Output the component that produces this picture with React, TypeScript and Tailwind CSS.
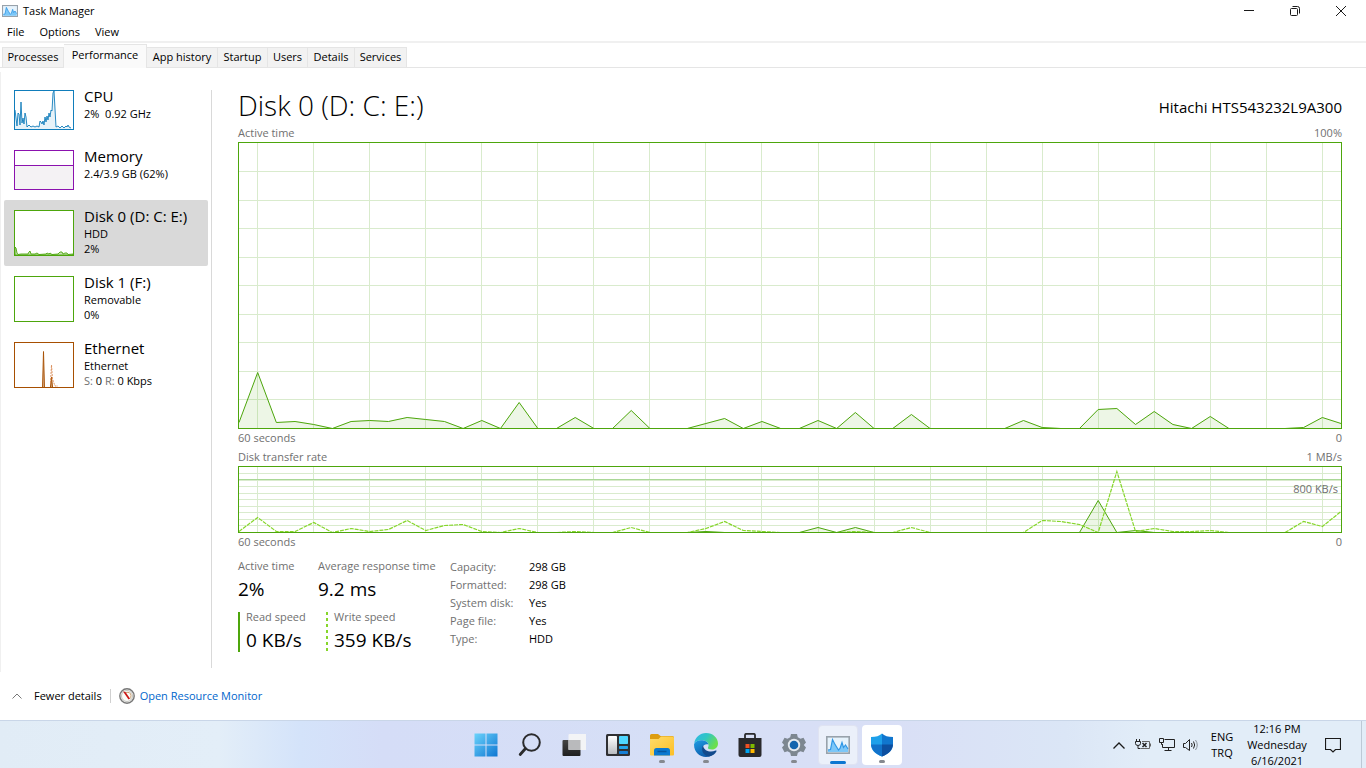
import React, { useState } from 'react';

interface Resource {
  id: string;
  name: string;
  lines: React.ReactNode[];
  graph: React.ReactNode;
}

const TABS = [
  { label: 'Processes', width: 'w-[62px]' },
  { label: 'Performance', width: 'w-[83px]' },
  { label: 'App history', width: 'w-[71px]' },
  { label: 'Startup', width: 'w-[50px]' },
  { label: 'Users', width: 'w-[40px]' },
  { label: 'Details', width: 'w-[47px]' },
  { label: 'Services', width: 'w-[52px]' },
];

// One sample per second, 60 samples. Values are in chart units from the bottom.
const ACTIVE_TIME = [
  6, 56, 6, 7, 4, 0, 7, 8, 7, 11, 9, 7, 0, 8, 0, 26, 0, 0, 11, 0,
  0, 18, 0, 0, 0, 5, 10, 0, 7, 0, 0, 8, 0, 16, 0, 0, 14, 0, 0, 0,
  0, 0, 8, 1, 0, 0, 19, 20, 4, 17, 4, 0, 12, 0, 0, 0, 0, 1, 11, 5,
];
const WRITE_SPEED = [
  1, 15, 1, 1, 10, 0, 4, 1, 3, 12, 2, 7, 8, 1, 0, 4, 0, 0, 1, 0,
  0, 5, 0, 0, 0, 4, 11, 2, 1, 0, 0, 0, 0, 1, 0, 0, 5, 0, 0, 0,
  0, 0, 0, 12, 11, 8, 0, 61, 1, 4, 1, 1, 2, 0, 0, 0, 0, 11, 6, 21,
];
const READ_SPEED = [
  0, 0, 0, 0, 0, 0, 0, 0, 0, 0, 0, 0, 0, 0, 0, 0, 0, 0, 0, 0,
  0, 0, 0, 0, 0, 1, 0, 0, 0, 0, 0, 5, 0, 5, 0, 0, 0, 0, 0, 0,
  0, 0, 0, 0, 0, 0, 32, 0, 2, 0, 0, 0, 0, 0, 0, 0, 0, 0, 0, 0,
];

const toPoints = (values: number[], height: number) =>
  values.map((v, i) => `${i * 10},${height - v}`).join(' ');

const Grid: React.FC<{ height: number; rows: number }> = ({ height, rows }) => (
  <g stroke="#d9ebcd" shapeRendering="crispEdges">
    {Array.from({ length: 20 }, (_, i) => (
      <line key={`v${i}`} x1={10 + i * 30} x2={10 + i * 30} y1={0} y2={height} vectorEffect="non-scaling-stroke" />
    ))}
    {Array.from({ length: rows - 1 }, (_, i) => (
      <line key={`h${i}`} x1={0} x2={590} y1={((i + 1) * height) / rows} y2={((i + 1) * height) / rows} vectorEffect="non-scaling-stroke" />
    ))}
  </g>
);

const ActiveTimeChart = () => (
  <svg viewBox="0 0 590 285" preserveAspectRatio="none" className="block min-h-60 w-full grow basis-0 border border-[#4da60c]">
    <Grid height={285} rows={10} />
    <polygon points={`0,285 ${toPoints(ACTIVE_TIME, 285)} 590,285`} fill="#4da60c" fillOpacity="0.1" />
    <polyline points={toPoints(ACTIVE_TIME, 285.5)} fill="none" stroke="#4da60c" vectorEffect="non-scaling-stroke" />
  </svg>
);

const TransferChart = () => (
  <div className="relative">
    <svg viewBox="0 0 590 65" preserveAspectRatio="none" className="block h-[67px] w-full border border-[#4da60c]">
      <Grid height={65} rows={10} />
      <line x1="0" x2="590" y1="12.5" y2="12.5" stroke="#a9d796" vectorEffect="non-scaling-stroke" />
      <polygon points={`0,65 ${toPoints(READ_SPEED, 65)} 590,65`} fill="#4da60c" fillOpacity="0.1" />
      <polyline points={toPoints(READ_SPEED, 65.5)} fill="none" stroke="#4da60c" vectorEffect="non-scaling-stroke" />
      <polyline points={toPoints(WRITE_SPEED, 65.5)} fill="none" stroke="#86d62b" strokeWidth="1.2" strokeDasharray="4 1" vectorEffect="non-scaling-stroke" />
    </svg>
    <span className="absolute top-[15px] right-1 leading-4 text-[#707070]">800 KB/s</span>
  </div>
);

const RESOURCES: Resource[] = [
  {
    id: 'cpu',
    name: 'CPU',
    lines: ['2%  0.92 GHz'],
    graph: (
      <svg viewBox="0 0 58 38" className="block h-10 w-[60px] border border-[#117dbb] bg-white">
        <path
          d="M0 19L1 27L2 35L3 22L4 23L5 34L6 11L7 32L8 27L9 33L10 22L11 26L12 36L14 34L16 36L18 35L20 36L22 35L24 36L25 30L26 31L27 33L28 30L29 34L30 26L31 31L32 25L33 29L34 22L35 26L36 19L37 20L38 2L39 0L40 18L41 36L43 35L45 37L47 35L49 37L51 35L52 36L53 34L54 36L56 37V38H0Z"
          fill="#117dbb"
          fillOpacity="0.1"
        />
        <path
          d="M0 19L1 27L2 35L3 22L4 23L5 34L6 11L7 32L8 27L9 33L10 22L11 26L12 36L14 34L16 36L18 35L20 36L22 35L24 36L25 30L26 31L27 33L28 30L29 34L30 26L31 31L32 25L33 29L34 22L35 26L36 19L37 20L38 2L39 0L40 18L41 36L43 35L45 37L47 35L49 37L51 35L52 36L53 34L54 36L56 37"
          fill="none"
          stroke="#117dbb"
          strokeWidth="0.9"
        />
      </svg>
    ),
  },
  {
    id: 'memory',
    name: 'Memory',
    lines: ['2.4/3.9 GB (62%)'],
    graph: (
      <svg viewBox="0 0 58 38" className="block h-10 w-[60px] border border-[#8b12ae] bg-white">
        <rect y="14" width="58" height="24" fill="#f4f2f4" />
        <path d="M0 14.5H58" stroke="#8b12ae" />
      </svg>
    ),
  },
  {
    id: 'disk0',
    name: 'Disk 0 (D: C: E:)',
    lines: ['HDD', '2%'],
    graph: (
      <svg viewBox="0 0 58 44" className="block h-[46px] w-[60px] border border-[#4da60c] bg-white">
        <path
          d="M0 36L1 37L2 42L3 43.5L6 43L13 43L14 41L15 40L16 43L20 43L22 42L24 43.5L31 43L32 42L34 43L35 42L37 43.5L43 43L45 41L47 41L48 43L50 42L52 42L53 43.5L58 43V44H0Z"
          fill="#4da60c"
          fillOpacity="0.3"
          stroke="#4da60c"
          strokeWidth="0.9"
        />
      </svg>
    ),
  },
  {
    id: 'disk1',
    name: 'Disk 1 (F:)',
    lines: ['Removable', '0%'],
    graph: <svg viewBox="0 0 58 44" className="block h-[46px] w-[60px] border border-[#4da60c] bg-white" />,
  },
  {
    id: 'ethernet',
    name: 'Ethernet',
    lines: [
      'Ethernet',
      <>
        <span className="text-[#707070]">S:</span> 0 <span className="text-[#707070]">R:</span> 0 Kbps
      </>,
    ],
    graph: (
      <svg viewBox="0 0 58 44" className="block h-[46px] w-[60px] border border-[#a74f01] bg-white">
        <path d="M27.5 44L28.5 8.5L29.5 44" fill="#a74f01" fillOpacity="0.5" stroke="#a74f01" strokeWidth="0.9" />
        <path d="M35.5 44L36.5 34L37.5 44" fill="#a74f01" fillOpacity="0.5" stroke="#a74f01" />
        <path d="M35.5 40L36.5 22L37.5 36L40 43H43" fill="none" stroke="#d98a55" strokeWidth="0.9" strokeDasharray="2 1" />
      </svg>
    ),
  },
];

const MonitorIcon: React.FC<{ className?: string }> = ({ className }) => (
  <svg viewBox="0 0 24 18" preserveAspectRatio="none" className={className}>
    <rect x="0.8" y="0.8" width="22.4" height="16.4" fill="#e6f3fc" stroke="#98a2ab" strokeWidth="1.6" />
    <path d="M2 14L4.5 13.5L6.500 3.500L8.500 7.500L10 10L12.500 14L14 12.500L16 6.500L17.500 11.500L19.500 9L22 13V16H2Z" fill="#7cc7f8" />
    <path d="M2 14L4.5 13.5L6.500 3.500L8.500 7.500L10 10L12.500 14L14 12.500L16 6.500L17.500 11.500L19.500 9L22 13" fill="none" stroke="#2f97e6" strokeWidth="1.2" />
  </svg>
);

const StartIcon = () => (
  <svg width="24" height="24" viewBox="0 0 24 24">
    <defs>
      <linearGradient id="start" x1="0" y1="0" x2="1" y2="1">
        <stop offset="0" stopColor="#6bd3fb" />
        <stop offset="1" stopColor="#0e76d2" />
      </linearGradient>
    </defs>
    <path d="M0.500 0.500H11.500V11.500H0.500ZM12.500 0.500H23.500V11.500H12.500ZM0.500 12.500H11.500V23.500H0.500ZM12.500 12.500H23.500V23.500H12.500Z" fill="url(#start)" />
  </svg>
);

const SearchIcon = () => (
  <svg width="24" height="24" viewBox="0 0 24 24" fill="none" stroke="#2b2b2d">
    <circle cx="13.500" cy="9.500" r="8.300" strokeWidth="2" />
    <path d="M7.500 15.500L2.200 21.500" strokeWidth="2.800" strokeLinecap="round" />
  </svg>
);

const TaskViewIcon = () => (
  <svg width="24" height="24" viewBox="0 0 24 24">
    <defs>
      <linearGradient id="tvDark" x1="0" y1="0" x2="0" y2="1">
        <stop offset="0" stopColor="#444" />
        <stop offset="1" stopColor="#1f1f1f" />
      </linearGradient>
    </defs>
    <rect x="0.500" y="7" width="18" height="16" rx="1" fill="url(#tvDark)" />
    <rect x="6.500" y="1" width="18" height="16" rx="1" fill="#f3f4f6" />
    <path d="M6.500 7H18.500V17H6.500Z" fill="#b9babc" />
  </svg>
);

const WidgetsIcon = () => (
  <svg width="24" height="24" viewBox="0 0 24 24">
    <defs>
      <linearGradient id="wdLight" x1="0" y1="0" x2="0" y2="1">
        <stop offset="0" stopColor="#fff" />
        <stop offset="1" stopColor="#b9bcc0" />
      </linearGradient>
    </defs>
    <rect y="1" width="24" height="22" rx="1.500" fill="#2f3033" />
    <rect x="2" y="3" width="9" height="18" rx="0.800" fill="url(#wdLight)" />
    <rect x="13" y="3" width="9" height="8" rx="0.800" fill="#4fd6ff" />
    <rect x="13" y="13" width="9" height="3" rx="0.800" fill="#23a5ec" />
    <rect x="13" y="18" width="9" height="3" rx="0.800" fill="#167fd4" />
  </svg>
);

const FolderIcon = () => (
  <svg width="24" height="24" viewBox="0 0 24 24">
    <defs>
      <linearGradient id="folder" x1="0" y1="0" x2="1" y2="1">
        <stop offset="0" stopColor="#ffdc6b" />
        <stop offset="1" stopColor="#fcbf26" />
      </linearGradient>
    </defs>
    <path d="M0 2.500Q0 1 1.500 1H8L10.500 3H22.500Q24 3 24 4.500V10H0Z" fill="#dd9d10" />
    <path d="M0 6H8.500L11 3.500H22.500Q24 3.500 24 5V21.500Q24 22.500 23 22.500H1Q0 22.500 0 21.500Z" fill="url(#folder)" />
    <path d="M4 22.500V17.500Q4 15 6.500 15H17.500Q20 15 20 17.500V22.500Z" fill="#0b79d0" />
    <path d="M7.500 18.500H16.500" stroke="#07579f" strokeWidth="1.500" />
  </svg>
);

const EdgeIcon = () => (
  <svg width="24" height="24" viewBox="0 0 24 24">
    <defs>
      <linearGradient id="edgeTop" x1="0" y1="0" x2="1" y2="0.500">
        <stop offset="0" stopColor="#2fb5ea" />
        <stop offset="0.500" stopColor="#30c6c4" />
        <stop offset="1" stopColor="#6bdf4d" />
      </linearGradient>
      <linearGradient id="edgeLow" x1="0" y1="0" x2="0.600" y2="1">
        <stop offset="0" stopColor="#1e9de4" />
        <stop offset="1" stopColor="#0c58a8" />
      </linearGradient>
    </defs>
    <path d="M0.200 10.500C1 4.500 6 0 12 0C19 0 24 5 24 10.500C24 14 21.500 16.500 18 16.500C15 16.500 13.500 15.500 14 14.500C15.500 12.500 14.500 8 9 7.300C4.500 6.800 1 8.500 0.200 10.500Z" fill="url(#edgeTop)" />
    <path d="M0.100 11C1 8.500 4.500 6.900 8.500 7.300C12 7.700 14 9.500 14.500 11.500C12 10.500 8.500 12 8.500 15.500C8.500 20.500 14 23 19.500 21C17.500 23 15 24 12 24C5 24 -0.500 18 0.100 11Z" fill="url(#edgeLow)" />
    <path d="M9 12.500C6.500 16.500 9 22.500 15 23.500C18.500 22.800 21 21 22.500 18.200C22.800 17.600 22.200 17.200 21.500 17.600C17 19.800 10 18.500 9 12.500Z" fill="#124a8c" />
  </svg>
);

const StoreIcon = () => (
  <svg width="24" height="24" viewBox="0 0 24 24">
    <path d="M7 6V2Q7 0.800 8.500 0.800H15.500Q17 0.800 17 2V6" fill="none" stroke="#2a2a2c" strokeWidth="1.800" />
    <path d="M0.500 5H23.500V22Q23.500 24 21.500 24H2.500Q0.500 24 0.500 22Z" fill="#2a2a2c" />
    <rect x="7.500" y="11" width="4" height="4" fill="#f25022" />
    <rect x="12.500" y="11" width="4" height="4" fill="#7fba00" />
    <rect x="7.500" y="16" width="4" height="4" fill="#00a4ef" />
    <rect x="12.500" y="16" width="4" height="4" fill="#ffb900" />
  </svg>
);

const SettingsIcon = () => (
  <svg width="24" height="24" viewBox="0 0 24 24">
    <path d="M9 1H15L15.800 4.200L18.500 5.800L21.500 4.800L24 9.500L21.800 12L24 14.500L21.500 19.200L18.500 18.200L15.800 19.800L15 23H9L8.200 19.800L5.500 18.200L2.500 19.200L0 14.500L2.200 12L0 9.500L2.500 4.800L5.500 5.800L8.200 4.200Z" fill="#7d8790" />
    <circle cx="12" cy="12" r="6.200" fill="#e4e9ef" />
    <circle cx="12" cy="12" r="4.300" fill="#1264ae" />
  </svg>
);

const ShieldIcon = () => (
  <svg width="24" height="24" viewBox="0 0 24 24">
    <path d="M12 0.500C9.500 3 6 4 1 4V11C1 17 5 21 12 23.500Z" fill="#1ea0ea" />
    <path d="M12 0.500C14.500 3 18 4 23 4V11C23 17 19 21 12 23.500Z" fill="#1176ce" />
    <path d="M1 11.500H12V23.500C5.500 21 1.500 17 1 11.500Z" fill="#1272ca" />
    <path d="M23 11.500H12V23.500C18.500 21 22.500 17 23 11.500Z" fill="#0d4fa0" />
  </svg>
);

const PINNED = [
  { label: 'Start', icon: <StartIcon />, state: '' },
  { label: 'Search', icon: <SearchIcon />, state: '' },
  { label: 'Task View', icon: <TaskViewIcon />, state: '' },
  { label: 'Widgets', icon: <WidgetsIcon />, state: '' },
  { label: 'File Explorer', icon: <FolderIcon />, state: 'open' },
  { label: 'Microsoft Edge', icon: <EdgeIcon />, state: 'open' },
  { label: 'Microsoft Store', icon: <StoreIcon />, state: '' },
  { label: 'Settings', icon: <SettingsIcon />, state: 'open' },
  { label: 'Task Manager', icon: <MonitorIcon className="h-[18px] w-6" />, state: 'active' },
  { label: 'Windows Security', icon: <ShieldIcon />, state: 'alert' },
];

const TitleBar = () => (
  <header className="flex h-[22px] items-center justify-between">
    <div className="flex items-center gap-[5px] pl-[2px]">
      <MonitorIcon className="h-3 w-4" />
      <h1 className="leading-4">Task Manager</h1>
    </div>
    <div className="flex h-full pr-0.5 text-[#1a1a1a]">
      <button aria-label="Minimize" className="flex w-[46px] items-center justify-center">
        <svg width="10" height="10" stroke="currentColor"><path d="M0 4.500H10" /></svg>
      </button>
      <button aria-label="Restore" className="flex w-[46px] items-center justify-center">
        <svg width="10" height="10" fill="none" stroke="currentColor">
          <rect x="0.500" y="2.500" width="7" height="7" rx="1" />
          <path d="M2.500 0.500H7.500Q9.500 0.500 9.500 2.500V7.500" />
        </svg>
      </button>
      <button aria-label="Close" className="flex w-[46px] items-center justify-center">
        <svg width="10" height="10" stroke="currentColor"><path d="M0 0L10 10M10 0L0 10" /></svg>
      </button>
    </div>
  </header>
);

const Stat: React.FC<{ label: string; value: string; className?: string }> = ({ label, value, className = '' }) => (
  <div className={className}>
    <p className="leading-4 text-[#707070]">{label}</p>
    <p className="text-[19px] leading-[30px]">{value}</p>
  </div>
);

const DISK_INFO = [
  ['Capacity:', '298 GB'],
  ['Formatted:', '298 GB'],
  ['System disk:', 'Yes'],
  ['Page file:', 'Yes'],
  ['Type:', 'HDD'],
];

const DiskPanel = () => (
  <section className="flex min-w-0 flex-1 flex-col pr-6 pl-[26px]">
    <div className="flex h-[34px] items-center justify-between">
      <h2 className="text-[28px] leading-[34px] font-light">Disk 0 (D: C: E:)</h2>
      <p className="pt-1 text-[15px] leading-5">Hitachi HTS543232L9A300</p>
    </div>
    <div className="mt-[3px] flex justify-between pb-px leading-4 text-[#707070]">
      <span>Active time</span>
      <span>100%</span>
    </div>
    <ActiveTimeChart />
    <div className="mt-px flex justify-between leading-4 text-[#707070]">
      <span>60 seconds</span>
      <span>0</span>
    </div>
    <div className="mt-[3px] flex justify-between pb-px leading-4 text-[#707070]">
      <span>Disk transfer rate</span>
      <span>1 MB/s</span>
    </div>
    <TransferChart />
    <div className="mt-px flex justify-between leading-4 text-[#707070]">
      <span>60 seconds</span>
      <span>0</span>
    </div>
    <div className="mt-2 flex h-[114px] items-start">
      <div className="grid w-[212px] grid-cols-[80px_1fr] gap-y-2">
        <Stat label="Active time" value="2%" />
        <Stat label="Average response time" value="9.2 ms" />
        <div className="flex h-10 gap-1.5">
          <span className="w-0.5 bg-[#4da60c]" />
          <Stat label="Read speed" value="0 KB/s" className="-mt-[3px]" />
        </div>
        <div className="ml-2 flex h-10 gap-1.5">
          <span className="w-0.5 bg-[repeating-linear-gradient(to_bottom,#86d62b_0_3px,transparent_3px_6px)]" />
          <Stat label="Write speed" value="359 KB/s" className="-mt-[3px]" />
        </div>
      </div>
      <table>
        <tbody>
          {DISK_INFO.map(([label, value]) => (
            <tr key={label}>
              <th scope="row" className="w-[79px] text-left leading-[18px] font-normal text-[#707070]">{label}</th>
              <td className="leading-[18px]">{value}</td>
            </tr>
          ))}
        </tbody>
      </table>
    </div>
  </section>
);

const Taskbar = () => (
  <footer className="grid h-12 grid-cols-[1fr_auto_1fr] border-t border-[#c9d6e8] bg-[linear-gradient(to_right,#e1ecf6_0%,#e3eef8_16%,#d4e3fa_22%,#d5ddf7_28%,#d6dff6_50%,#d9dff6_65%,#dbe6f6_78%,#e2edf8_84%,#e2edf8_100%)] pb-px pl-px">
    <div />
    <nav className="flex items-center gap-1">
      {PINNED.map(({ label, icon, state }) => (
        <button
          key={label}
          aria-label={label}
          className={`relative flex h-10 w-10 items-center justify-center rounded ${
            state === 'active' ? 'border border-[#dfe3f2] bg-[#ebf0fa]' : state === 'alert' ? 'bg-white' : ''
          }`}
        >
          {icon}
          {state === 'active' && <span className="absolute bottom-0 h-[3px] w-4 rounded-full bg-[#0b76d1]" />}
          {(state === 'open' || state === 'alert') && <span className="absolute bottom-0.5 h-[3px] w-1.5 rounded-full bg-[#85898f]" />}
        </button>
      ))}
    </nav>
    <div className="flex items-center justify-end text-center leading-4">
      <button aria-label="Show hidden icons" className="w-6">
        <svg width="12" height="7" viewBox="0 0 12 7" fill="none" stroke="#1a1a1a" strokeWidth="1.300" className="mx-auto"><path d="M0.500 6.500L6 1L11.500 6.500" /></svg>
      </button>
      <button aria-label="Battery" className="w-6">
        <svg width="16" height="12" viewBox="0 0 16 12" fill="none" stroke="#222" className="mx-auto">
          <path d="M1.500 0V2.500M4.500 0V2.500M0.500 2.500H5.500V4.500Q5.500 6.500 3 6.500Q0.500 6.500 0.500 4.500ZM3 6.500V9.500H5.500" />
          <path d="M7 2.500H14.500V9.500H6" stroke="#666" />
          <path d="M15.500 4.500V7.500" stroke="#666" />
          <path d="M7.500 4L11.500 8M11.500 4L7.500 8" strokeWidth="1.500" />
        </svg>
      </button>
      <button aria-label="Network" className="w-6">
        <svg width="16" height="14" viewBox="0 0 16 14" fill="none" stroke="#222" className="mx-auto">
          <path d="M5.500 1.500H15.500V9.500H3.500V6.500M9.500 9.500V12.500M5.500 12.500H12.500" />
          <path d="M0.500 0.500H4.500V4.500H0.500ZM2.500 4.500V6.500H4" />
        </svg>
      </button>
      <button aria-label="Volume" className="w-6">
        <svg width="16" height="14" viewBox="0 0 16 14" fill="none" stroke="#222" className="mx-auto">
          <path d="M0.500 5.500H2.500L6.500 1.500V12.500L2.500 9.500H0.500Z" />
          <path d="M8.500 5Q9.800 7 8.500 9M10.500 3.500Q12.800 7 10.500 10.500" />
          <path d="M12.500 2Q16 7 12.500 12" stroke="#8a929a" />
        </svg>
      </button>
      <button aria-label="Input language" className="w-[38px]">
        <span className="block">ENG</span>
        <span className="block">TRQ</span>
      </button>
      <button aria-label="Clock" className="w-[72px]">
        <span className="block">12:16 PM</span>
        <span className="block">Wednesday</span>
        <span className="block">6/16/2021</span>
      </button>
      <button aria-label="Notifications" className="w-10">
        <svg width="16" height="16" viewBox="0 0 16 16" fill="none" stroke="#1a1a1a" strokeWidth="1.200" className="mx-auto">
          <path d="M0.500 1.500H15.500V12.500H10.500L8 15L5.500 12.500H0.500Z" />
        </svg>
      </button>
      <span className="mr-1 ml-2 h-full w-px bg-[#bcc9d6]" />
    </div>
  </footer>
);

const App: React.FC = () => {
  const [tab, setTab] = useState('Performance');
  const [selected, setSelected] = useState('disk0');

  return (
    <div className="flex min-h-screen flex-col bg-white font-['Open_Sans',sans-serif] text-[11px] text-black">
      <TitleBar />
      <nav className="flex h-[21px] items-center gap-[15px] border-b-2 border-[#f0f0f0] pt-px pl-[7px] leading-4">
        <button>File</button>
        <button>Options</button>
        <button>View</button>
      </nav>

      <div className="flex h-[25px] items-end border-b border-[#e5e5e5] pl-[2px]">
        {TABS.map(({ label, width }) => (
          <button
            key={label}
            onClick={() => setTab(label)}
            className={`${width} border-t border-r border-[#e5e5e5] whitespace-nowrap ${
              tab === label ? '-mb-px h-6 bg-[#fafafa] pb-0.5' : 'h-5 bg-[#f2f2f2] first:border-l'
            }`}
          >
            {label}
          </button>
        ))}
      </div>

      <main className="mt-1 flex flex-1 border-l border-[#f0f0f0] pt-2">
        <aside className="w-[207px] shrink-0 pl-[3px]">
          {RESOURCES.map(({ id, name, lines, graph }) => (
            <button
              key={id}
              onClick={() => setSelected(id)}
              className={`flex w-full items-start gap-2.5 rounded-xs py-2.5 pl-2.5 text-left ${selected === id ? 'bg-[#d9d9d9]' : ''}`}
            >
              {graph}
              <span className="-mt-1 -mb-2 whitespace-pre">
                <span className="block text-[15px] leading-5">{name}</span>
                {lines.map((line, i) => (
                  <span key={i} className="block leading-[15px]">{line}</span>
                ))}
              </span>
            </button>
          ))}
        </aside>
        <div className="mt-2.5 mb-1 ml-[3px] w-px bg-[#d9d9d9]" />
        <div className="flex min-w-0 flex-1 pt-2"><DiskPanel /></div>
      </main>

      <div className="flex h-12 items-center leading-4">
        <button className="flex items-center gap-3 pl-3">
          <svg width="10" height="6" viewBox="0 0 10 6" fill="none" stroke="#777"><path d="M0.500 5.500L5 1L9.500 5.500" /></svg>
          Fewer details
        </button>
        <span className="mx-2 h-3.5 w-px bg-[#d0d0d0]" />
        <a href="#resource-monitor" className="flex items-center gap-[5px] text-[#0066cc]">
          <svg width="16" height="16" viewBox="0 0 16 16">
            <circle cx="8" cy="8" r="7.200" fill="#f3f3f1" stroke="#777" strokeWidth="1.400" />
            <circle cx="8" cy="8" r="5.500" fill="#fbfbf8" stroke="#c4c4c0" />
            <path d="M7 4.500Q11.500 3.500 12 7.500Q12 10 10.500 11" fill="none" stroke="#c9a074" />
            <path d="M4 3.500L6.500 4L11 10.500L9.500 11.500Z" fill="#cc1414" />
          </svg>
          Open Resource Monitor
        </a>
      </div>
      <Taskbar />
    </div>
  );
};

export default App;
